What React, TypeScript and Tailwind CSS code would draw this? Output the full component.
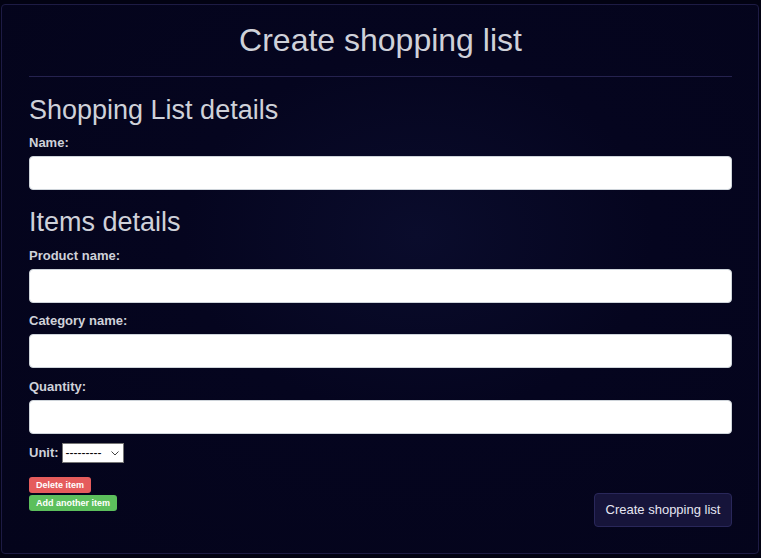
import React from "react";

function Field({ label, mt }: { label: string; mt: string }) {
  return (
    <>
      <label className={`${mt} block text-[13px] leading-[16px] font-bold`}>{label}</label>
      <input
        type="text"
        className="mt-[5px] block h-[34px] w-full rounded-[4px] border border-[#ced4da] bg-white"
      />
    </>
  );
}

export default function App() {
  return (
    <div className="min-h-[558px] w-[761px] bg-[#020212] pt-[4px] pl-[1px] font-['Liberation_Sans',Arial,sans-serif]">
      <div className="h-[550px] w-[758px] rounded-[4px] border border-[#1d1b44] bg-[radial-gradient(ellipse_at_55%_42%,#0a0c2c_0%,#05051f_40%,#04041b_100%)] pl-[27px] pr-[26px] pt-[16px] text-[#cfd1d9]">
        <h1 className="text-center text-[32px] leading-[38px] font-normal">Create shopping list</h1>
        <div className="mt-[17px] h-px w-full bg-[#25224f]" />
        <h3 className="mt-[17px] text-[27px] leading-[32px] font-normal">Shopping List details</h3>
        <Field label="Name:" mt="mt-[9px]" />
        <h3 className="mt-[16px] text-[27px] leading-[32px] font-normal">Items details</h3>
        <Field label="Product name:" mt="mt-[10px]" />
        <Field label="Category name:" mt="mt-[10px]" />
        <Field label="Quantity:" mt="mt-[11px]" />
        <div className="mt-[9px] flex h-[20px] items-center gap-[3px]">
          <span className="text-[13px] leading-[16px] font-bold">Unit:</span>
          <div className="flex h-[20px] w-[62px] items-center justify-between border border-[#767676] bg-white pl-[3px] pr-[4px] text-[12px] leading-[14px] text-black">
            <span>---------</span>
            <svg width="8" height="5" viewBox="0 0 8 5" fill="none">
              <path d="M0.5 0.5 L4 4 L7.5 0.5" stroke="#444" strokeWidth="1" />
            </svg>
          </div>
        </div>
        <div className="mt-[14px] flex items-start justify-between">
          <div className="flex flex-col items-start gap-[2px]">
            <button className="h-[16px] rounded-[3px] bg-[#e55c5c] px-[7px] text-[9px] leading-[16px] font-bold text-white">
              Delete item
            </button>
            <button className="h-[16px] rounded-[3px] bg-[#5cbf5c] px-[7px] text-[9px] leading-[16px] font-bold text-white">
              Add another item
            </button>
          </div>
          <button className="mt-[16px] h-[34px] w-[138px] rounded-[4px] border border-[#29275a] bg-[#16143a] text-[13px] text-[#e6e6f2]">
            Create shopping list
          </button>
        </div>
      </div>
    </div>
  );
}
